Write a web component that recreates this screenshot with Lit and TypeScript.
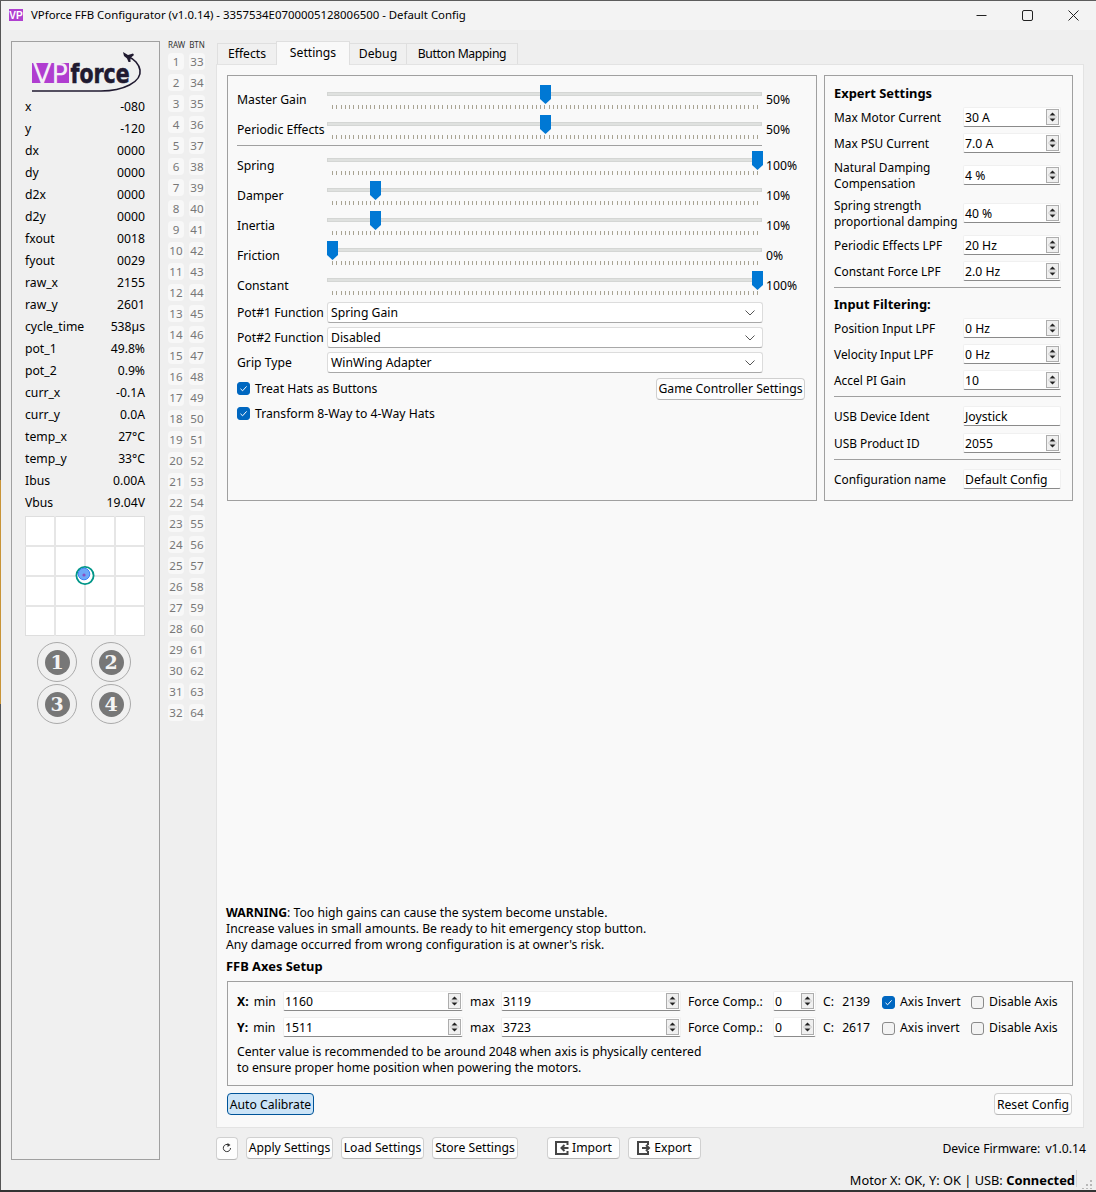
import { LitElement, html, css, svg } from "lit";
import { customElement } from "lit/decorators.js";

const stats: [string, string][] = [
  ["x", "-080"], ["y", "-120"], ["dx", "0000"], ["dy", "0000"], ["d2x", "0000"], ["d2y", "0000"],
  ["fxout", "0018"], ["fyout", "0029"], ["raw_x", "2155"], ["raw_y", "2601"], ["cycle_time", "538µs"],
  ["pot_1", "49.8%"], ["pot_2", "0.9%"], ["curr_x", "-0.1A"], ["curr_y", "0.0A"], ["temp_x", "27°C"],
  ["temp_y", "33°C"], ["Ibus", "0.00A"], ["Vbus", "19.04V"],
];
const sliders1: [string, number][] = [["Master Gain", 50], ["Periodic Effects", 50]];
const sliders2: [string, number][] = [["Spring", 100], ["Damper", 10], ["Inertia", 10], ["Friction", 0], ["Constant", 100]];

const spinArrows = html`<svg class="arrows" width="13" height="16" viewBox="0 0 13 16">
  <rect x="0.5" y="0.5" width="12" height="15" fill="#f0f0f0" stroke="#adadad"/>
  <path d="M6.5 3.5 L9.5 6.5 H3.5 Z" fill="#222"/>
  <path d="M6.5 12.5 L9.5 9.5 H3.5 Z" fill="#222"/>
  <path d="M2 8 H11" stroke="#c9c9c9"/>
</svg>`;

const spin = (v: string, cls = "") => html`<div class="spin ${cls}"><span>${v}</span>${spinArrows}</div>`;
const check = (on: boolean) => html`<span class="cb ${on ? "on" : ""}">${on
  ? html`<svg width="13" height="13" viewBox="0 0 13 13"><path d="M3.5 6.8 L5.6 8.8 L9.6 4.4" fill="none" stroke="#fff" stroke-width="1"/></svg>`
  : ""}</span>`;
const combo = (v: string) => html`<div class="combo"><span>${v}</span><svg width="10" height="6" viewBox="0 0 10 6"><path d="M0.5 0.5 L5 5 L9.5 0.5" fill="none" stroke="#555"/></svg></div>`;
const slider = (label: string, pct: number) => html`<div class="srow">
  <div class="slabel">${label}</div>
  <div class="sl">
    <div class="track"></div>
    <div class="ticks"></div>
    <svg class="thumb" style="left:${(pct / 100) * 425}px" width="11" height="19" viewBox="0 0 11 19"><path d="M0 0 H11 V14 L5.5 19 L0 14 Z" fill="#0078d4"/></svg>
  </div>
  <div class="sval">${pct}%</div>
</div>`;
const xrow = (l: unknown, v: unknown, cls = "") => html`<div class="xrow ${cls}"><div class="xl">${l}</div>${v}</div>`;
const importIcon = html`<svg width="14" height="14" viewBox="0 0 14 14"><path d="M12.5 4 V1 H1 V13 H12.5 V10" fill="none" stroke="#444" stroke-width="2"/><path d="M13.5 7 H7 M9.5 4 L6.5 7 L9.5 10" fill="none" stroke="#444" stroke-width="2"/></svg>`;
const exportIcon = html`<svg width="14" height="14" viewBox="0 0 14 14"><path d="M11 4 V1 H1 V13 H11 V10" fill="none" stroke="#444" stroke-width="2"/><path d="M5 7 H12 M9 4 L12 7 L9 10" fill="none" stroke="#444" stroke-width="2"/></svg>`;

@customElement("app-root")
export class AppRoot extends LitElement {
  static styles = css`
    :host { display: block; width: 1096px; height: 1192px; overflow: hidden; position: relative;
      background: #efefef; font: 12.2px/16px "Noto Sans", sans-serif; color: #000; }
    * { box-sizing: border-box; }
    .edge-l { position: absolute; left: 0; top: 0; bottom: 0; width: 1px; background: #555; }
    .edge-o { position: absolute; left: 0; top: 480px; height: 224px; width: 1px; background: #c89438; }
    .edge-b { position: absolute; left: 0; right: 0; bottom: 0; height: 2px; background: #333; }
    .edge-t { position: absolute; left: 0; right: 0; top: 0; height: 1px; background: #5c5c5c; }
    .title { height: 30px; display: flex; align-items: center; background: #f3f3f3; padding-left: 9px; font-size: 11.4px; flex: none; }
    .title .icon { margin-right: 8px; display: block; }
    .title .t { flex: 1; white-space: nowrap; }
    .wbtn { width: 46px; height: 30px; display: flex; align-items: center; justify-content: center; }
    .root { display: flex; flex-direction: column; height: 100%; }
    .body { display: flex; height: 1130px; flex: none; padding: 11px 0 0 11px; }
    .stats { width: 149px; height: 1119px; border: 1px solid #a0a0a0; background: #f0f0f0; padding: 8px 14px 0 13px; flex: none; display: flex; flex-direction: column; }
    .logo { display: block; margin: 0 -14px 0 -13px; height: 45px; flex: none; }
    .st { height: 22px; display: flex; justify-content: space-between; align-items: center; flex: none; padding-top: 2px; }
    .plot { display: block; margin-top: 3px; flex: none; }
    .btns { display: grid; grid-template-columns: 40px 40px; column-gap: 14px; row-gap: 2px; margin: 6px 0 0 12px; }
    .nb { width: 40px; height: 40px; border: 1px solid #aaa; border-radius: 50%; display: flex; align-items: center; justify-content: center; }
    .nb span { width: 25px; height: 25px; border-radius: 50%; background: #777; color: #f4f4f4; font: bold 19px/25px "DejaVu Serif", serif; text-align: center; }
    .bcol { width: 37px; margin: 0 11px 0 8px; flex: none; display: grid; grid-template-columns: 16px 16px; column-gap: 5px; row-gap: 4px; align-content: start; }
    .bh { font-size: 8px; line-height: 8px; height: 8px; color: #333; white-space: nowrap; text-align: center; }
    .bc { height: 17px; background: #f8f8f8; border-radius: 4px; color: #777; text-align: center; line-height: 17px; font-size: 11.6px; }
    .right { width: 868px; flex: none; display: flex; flex-direction: column; }
    .tabs { display: flex; height: 23px; align-items: flex-end; padding-left: 1px; flex: none; position: relative; z-index: 1; }
    .tab { height: 21px; border: 1px solid #dfdfdf; border-bottom: 0; background: #f0f0f0; text-align: center; line-height: 20px; margin-right: -1px; white-space: nowrap; }
    .tab.sel { height: 24px; background: #f9f9f9; margin-bottom: -1px; line-height: 22px; position: relative; }
    .tab.w1 { width: 60px; } .tab.w2 { width: 74px; } .tab.w3 { width: 58px; } .tab.w4 { width: 112px; letter-spacing: -0.35px; }
    .pane { height: 1064px; background: #f9f9f9; border: 1px solid #e3e3e3; padding: 10px 10px 12px 10px; display: flex; flex-direction: column; flex: none; }
    .top { display: flex; gap: 7px; flex: none; }
    .group { border: 1px solid #a0a0a0; }
    .g1 { width: 590px; height: 426px; padding: 9px 0 0 9px; }
    .g2 { width: 249px; height: 426px; padding: 9px 11px 0 9px; display: flex; flex-direction: column; gap: 6px; font-size: 11.9px; }
    .srow { display: flex; height: 30px; position: relative; }
    .slabel { width: 90px; padding-top: 7px; white-space: nowrap; }
    .sl { width: 435px; height: 30px; position: relative; }
    .track { position: absolute; left: 0; right: 0; top: 7px; height: 4px; background: #dfe1df; border: 1px solid #d4d6d4; }
    .ticks { position: absolute; left: 5px; width: 426px; top: 20px; height: 4px;
      background: repeating-linear-gradient(90deg, #a8a393 0 1px, transparent 1px 4.25px); }
    .thumb { position: absolute; top: 0; display: block; }
    .sval { margin-left: 4px; padding-top: 7px; white-space: nowrap; position: relative; }
    .hr1 { width: 525px; height: 1px; background: #a0a0a0; margin-bottom: 5px; }
    .combos { padding-top: 1px; }
    .crow { display: flex; align-items: center; height: 21px; margin-bottom: 4px; width: 526px; }
    .crow.end { margin-bottom: 3px; }
    .crow .lab { width: 90px; white-space: nowrap; }
    .combo { width: 436px; height: 21px; background: #fff; border: 1px solid #dcdcdc; border-bottom-color: #a8a8a8; border-radius: 3px; display: flex; align-items: center; justify-content: space-between; padding: 0 7px 0 3px; }
    .chk { display: flex; align-items: center; gap: 5px; white-space: nowrap; }
    .cb { width: 13px; height: 13px; border-radius: 3px; border: 1px solid #8a8a8a; background: #f3f3f3; display: block; flex: none; }
    .cb.on { background: #0067c0; border-color: #0067c0; position: relative; }
    .cb svg { display: block; margin: -1px; }
    .chkline { display: flex; align-items: center; justify-content: space-between; height: 25px; width: 568px; }
    .btn { height: 22px; background: #fdfdfd; border: 1px solid #d0d0d0; border-bottom-color: #b5b5b5; border-radius: 4px; display: inline-flex; align-items: center; justify-content: center; white-space: nowrap; flex: none; }
    .gcs { width: 149px; }
    .h { font-weight: 700; font-size: 12.9px; height: 16px; line-height: 16px; flex: none; }
    .h.second { height: 18px; line-height: 20px; }
    .xrow { display: flex; align-items: center; justify-content: space-between; height: 20px; flex: none; }
    .xrow.tall { height: 32px; }
    .xrow.afterhr { margin-top: 3px; }
    .xrow.nudge { margin-top: 1px; }
    .xl { line-height: 16px; white-space: nowrap; }
    .hr { height: 1px; background: #a0a0a0; flex: none; }
    .spin { width: 98px; height: 20px; background: #fff; border: 1px solid #f0f0f0; border-bottom: 1px solid #8a8a8a; border-radius: 2px; display: flex; align-items: center; justify-content: space-between; padding: 0 1px; flex: none; font-size: 12.2px; }
    .spin span { white-space: nowrap; margin-top: 2px; }
    .spin .arrows { display: block; }
    .spin.wide { width: 180px; }
    .spin.small { width: 43px; }
    .gap { flex: 1; }
    .warn { flex: none; margin-left: -1px; height: 48px; padding-top: 1px; }
    .warn b { font-weight: 700; }
    .axt { margin: 6px 0 7px -1px; height: 16px; font-weight: 700; font-size: 12.9px; line-height: 16px; flex: none; }
    .axes { height: 105px; padding: 9px 0 0 9px; flex: none; }
    .agrid { display: grid; grid-template-columns: 46px 180px 38px 180px 92px 43px 66px 89px auto; row-gap: 6px; align-items: center; height: 46px; }
    .agrid > * { white-space: nowrap; }
    .agrid > div:not(.spin) { padding-top: 2px; }
    .agrid b { margin-right: 2px; }
    .m { padding-left: 7px; }
    .agrid > .c { padding-left: 7px; word-spacing: 5px; }
    .agrid > .m { padding-left: 7px; }
    .note { margin-top: 7px; }
    .actions { display: flex; justify-content: space-between; margin-top: 7px; padding-right: 1px; flex: none; }
    .actions .btn { padding-top: 1px; }
    .auto { background: #cce4f7; border-color: #005499; width: 87px; }
    .reset { width: 78px; }
    .foot { display: flex; align-items: flex-start; margin-top: 9px; height: 23px; flex: none; }
    .foot .btn { margin-right: 8px; padding-bottom: 1px; }
    .refresh { width: 22px; height: 23px; }
    .apply { width: 87px; } .load { width: 83px; } .store { width: 86px; margin-right: 29px !important; }
    .imp { width: 73px; gap: 3px; } .exp { width: 73px; gap: 3px; }
    .fw { margin-left: auto; margin-right: -2px; line-height: 24px; }
    .fw span { margin-left: 5px; }
    .status { height: 28px; display: flex; align-items: center; justify-content: flex-end; padding: 12px 21px 0 0; position: relative; flex: none; font-size: 12.8px; }
    .status b { font-weight: 700; font-size: 12.9px; }
    .status .sep { position: absolute; right: 19px; top: 10px; height: 17px; width: 1px; background: #d5d5d5; }
    .grip { position: absolute; right: 3px; top: 20px; display: block; }
  `;

  render() {
    const cells = [];
    for (let i = 1; i <= 32; i++) {
      cells.push(html`<div class="bc">${i}</div><div class="bc">${i + 32}</div>`);
    }
    return html`<div class="root">
      <div class="title">
        <svg class="icon" width="14" height="12" viewBox="0 0 14 12">
          <rect width="14" height="12" fill="#b040d0"/>
          <text x="7" y="10" font-family="Liberation Sans" font-weight="700" font-size="10" fill="#fff" text-anchor="middle">VP</text>
        </svg>
        <div class="t">VPforce FFB Configurator (v1.0.14) - 3357534E0700005128006500 - Default Config</div>
        <div class="wbtn"><svg width="11" height="11" viewBox="0 0 11 11"><path d="M0.5 5.5 H10.5" stroke="#222"/></svg></div>
        <div class="wbtn"><svg width="11" height="11" viewBox="0 0 11 11"><rect x="0.5" y="0.5" width="10" height="10" rx="1.5" fill="none" stroke="#222"/></svg></div>
        <div class="wbtn"><svg width="11" height="11" viewBox="0 0 11 11"><path d="M0.5 0.5 L10.5 10.5 M10.5 0.5 L0.5 10.5" stroke="#222"/></svg></div>
      </div>
      <div class="body">
        <div class="stats">
          <svg class="logo" width="147" height="45" viewBox="11 50 147 45">
            <rect x="31" y="63" width="37" height="20" fill="#b03dd0"/>
            <text x="49.5" y="83" font-family="DejaVu Sans" font-size="27" fill="#f4f0f6" text-anchor="middle" textLength="35" lengthAdjust="spacingAndGlyphs">VP</text>
            <text x="69.5" y="83" font-family="DejaVu Sans" font-weight="700" font-size="27" fill="#201a30" stroke="#201a30" stroke-width="0.6" textLength="59" lengthAdjust="spacingAndGlyphs">force</text>
            <path d="M31 91 H100 C122 91 141 82 139 70 C138 64 133 59 128 57" fill="none" stroke="#201a30" stroke-width="1.6"/>
            <path d="M122 52 L127 55 L132 53.5 L133 55 L129.5 58 L129.5 62 L127.5 62 L126 58.5 L123 56 Z" fill="#201a30"/>
          </svg>
          ${stats.map(([k, v]) => html`<div class="st"><span>${k}</span><span>${v}</span></div>`)}
          <svg class="plot" width="120" height="120" viewBox="0 0 120 120">
            <rect x="0.5" y="0.5" width="119" height="119" fill="#fff" stroke="#dedede"/>
            ${[30, 60, 90].map((p) => svg`<path d="M${p} 0 V120 M0 ${p} H120" stroke="#e6e6e6" stroke-width="2"/>`)}
            <circle cx="60" cy="59.5" r="8.6" fill="#fff" stroke="#009688" stroke-width="1.8"/>
            <circle cx="59" cy="58" r="5.8" fill="#6ea8f7" stroke="#3b82f6"/>
            <circle cx="59" cy="59" r="1.6" fill="#8a4fc0"/>
          </svg>
          <div class="btns">
            ${[1, 2, 3, 4].map((n) => html`<div class="nb"><span>${n}</span></div>`)}
          </div>
        </div>
        <div class="bcol">
          <div class="bh">RAW</div><div class="bh">BTN</div>
          ${cells}
        </div>
        <div class="right">
          <div class="tabs">
            <div class="tab w1">Effects</div>
            <div class="tab sel w2">Settings</div>
            <div class="tab w3">Debug</div>
            <div class="tab w4">Button Mapping</div>
          </div>
          <div class="pane">
            <div class="top">
              <div class="group g1">
                ${sliders1.map(([l, p]) => slider(l, p))}
                <div class="hr1"></div>
                ${sliders2.map(([l, p]) => slider(l, p))}
                <div class="combos">
                  <div class="crow"><div class="lab">Pot#1 Function</div>${combo("Spring Gain")}</div>
                  <div class="crow"><div class="lab">Pot#2 Function</div>${combo("Disabled")}</div>
                  <div class="crow end"><div class="lab">Grip Type</div>${combo("WinWing Adapter")}</div>
                </div>
                <div class="chkline"><div class="chk">${check(true)}Treat Hats as Buttons</div><div class="btn gcs">Game Controller Settings</div></div>
                <div class="chkline"><div class="chk">${check(true)}Transform 8-Way to 4-Way Hats</div></div>
              </div>
              <div class="group g2">
                <div class="h">Expert Settings</div>
                ${xrow("Max Motor Current", spin("30 A"))}
                ${xrow("Max PSU Current", spin("7.0 A"))}
                ${xrow(html`Natural Damping<br />Compensation`, spin("4 %"), "tall")}
                ${xrow(html`Spring strength<br />proportional damping`, spin("40 %"), "tall")}
                ${xrow("Periodic Effects LPF", spin("20 Hz"))}
                ${xrow("Constant Force LPF", spin("2.0 Hz"))}
                <div class="hr"></div>
                <div class="h second">Input Filtering:</div>
                ${xrow("Position Input LPF", spin("0 Hz"))}
                ${xrow("Velocity Input LPF", spin("0 Hz"))}
                ${xrow("Accel PI Gain", spin("10"))}
                <div class="hr"></div>
                ${xrow("USB Device Ident", html`<div class="spin"><span>Joystick</span></div>`, "afterhr")}
                ${xrow("USB Product ID", spin("2055"), "nudge")}
                <div class="hr"></div>
                ${xrow("Configuration name", html`<div class="spin"><span>Default Config</span></div>`, "afterhr")}
              </div>
            </div>
            <div class="gap"></div>
            <div class="warn"><b>WARNING</b>: Too high gains can cause the system become unstable.<br />Increase values in small amounts. Be ready to hit emergency stop button.<br />Any damage occurred from wrong configuration is at owner's risk.</div>
            <div class="axt">FFB Axes Setup</div>
            <div class="group axes">
              <div class="agrid">
                <div><b>X:</b> min</div>${spin("1160", "wide")}<div class="m">max</div>${spin("3119", "wide")}<div class="m">Force Comp.:</div>${spin("0", "small")}<div class="c">C: 2139</div><div class="chk">${check(true)}Axis Invert</div><div class="chk">${check(false)}Disable Axis</div>
                <div><b>Y:</b> min</div>${spin("1511", "wide")}<div class="m">max</div>${spin("3723", "wide")}<div class="m">Force Comp.:</div>${spin("0", "small")}<div class="c">C: 2617</div><div class="chk">${check(false)}Axis invert</div><div class="chk">${check(false)}Disable Axis</div>
              </div>
              <div class="note">Center value is recommended to be around 2048 when axis is physically centered<br />to ensure proper home position when powering the motors.</div>
            </div>
            <div class="actions"><div class="btn auto">Auto Calibrate</div><div class="btn reset">Reset Config</div></div>
          </div>
          <div class="foot">
            <div class="btn refresh"><svg width="10" height="10" viewBox="0 0 10 10"><path d="M8.5 5 A3.6 3.6 0 1 1 6.5 1.8" fill="none" stroke="#333" stroke-width="1"/><path d="M5.5 0 L8.5 2 L5.5 4 Z" fill="#333"/></svg></div>
            <div class="btn apply">Apply Settings</div>
            <div class="btn load">Load Settings</div>
            <div class="btn store">Store Settings</div>
            <div class="btn imp">${importIcon}Import</div>
            <div class="btn exp">${exportIcon}Export</div>
            <div class="fw">Device Firmware:<span>v1.0.14</span></div>
          </div>
        </div>
      </div>
      <div class="status"><span>Motor X: OK, Y: OK | USB: <b>Connected</b></span><div class="sep"></div>
        <svg class="grip" width="11" height="9" viewBox="0 0 11 9"><path d="M8 0h2v2H8z M4 4h2v2H4z M8 4h2v2H8z M0 8h2v1H0z M4 8h2v1H4z M8 8h2v1H8z" fill="#b8b8b8"/></svg>
      </div>
    </div>
    <div class="edge-l"></div><div class="edge-o"></div><div class="edge-t"></div><div class="edge-b"></div>`;
  }
}
